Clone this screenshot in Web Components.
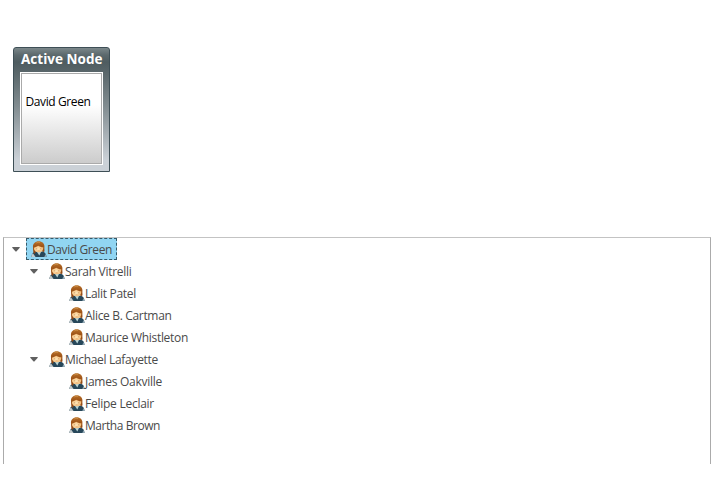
<!DOCTYPE html>
<html lang="en"><head><meta charset="utf-8"><title>Active Node</title>
<style>
html,body{margin:0;background:#fff;height:500px;overflow:hidden}
body{font:12px/22px "Open Sans","Noto Sans",sans-serif;color:#4a4a4a}
</style></head><body>
<org-page></org-page>
<script>
class FitText extends HTMLElement{
  connectedCallback(){
    const root=this.attachShadow({mode:'open'});
    root.innerHTML='<style>:host{display:inline-block;white-space:nowrap}span{display:inline-block}</style><span></span>';
    const s=root.querySelector('span'), t=this.getAttribute('text');
    s.textContent=t;
    const w=+this.getAttribute('width');
    s.style.letterSpacing=((w-s.getBoundingClientRect().width)/t.length)+'px';
  }
}
customElements.define('fit-text',FitText);

class PersonIcon extends HTMLElement{
  constructor(){super();this.attachShadow({mode:'open'}).innerHTML=`
<style>:host{display:block;width:16px;height:16px}svg{display:block}</style>
<svg width="16" height="16" viewBox="0 0 16 16">
<defs><linearGradient id="h" x2="0" y2="1"><stop stop-color="#b8732c"/><stop offset=".4" stop-color="#a05518"/><stop offset="1" stop-color="#8a4311"/></linearGradient>
<radialGradient id="f" cx=".45" cy=".5" r=".6"><stop stop-color="#ffe9bd"/><stop offset="1" stop-color="#f2b56e"/></radialGradient></defs>
<path d="M.4 16C.6 13.500 1.600 11.300 4 10.800h8c2.200.5 3.300 2.600 3.500 5.200z" fill="#27475a"/>
<path d="M.4 16c.1-1.600.6-2.800 1.500-3.800L4.600 16z" fill="#c3cacb"/>
<path d="M15.500 16c-.1-1.300-.4-2.300-1-3.100L13.300 16z" fill="#8ca4b0"/>
<path d="M6 11h4L8.300 14.500z" fill="#b9d5d6"/>
<path d="M2 6.300C1.600 2.500 4.300.2 7.700.2s6.100 2.200 5.700 5.800c-.2 1.500.3 3 0 4.500-.7.800-1.900.6-2.400-.5H4.800c-.1 1.800-.8 2.800-1.900 2.600C1.900 10.600 2.200 8.100 2 6.300z" fill="url(#h)"/>
<path d="M2.900 6.700C4.500 6 6.300 5.600 7.200 4.700c1.100.8 3 1.400 5.100 1.600.2 3-1.400 5-4.600 5s-4.900-1.800-4.800-4.600z" fill="url(#f)"/>
<path d="M4.900 7.800h1.300M9 7.800h1.300" stroke="#b97c45" stroke-width=".6"/>
<path d="M6.700 9.800h2" stroke="#dc9254" stroke-width=".5"/>
<path d="M5.300 2c1.100-.8 2.600-.9 3.700-.4" stroke="#d0944c" stroke-width=".8" fill="none"/>
</svg>`}
}
customElements.define('person-icon',PersonIcon);

class TreeRow extends HTMLElement{
  connectedCallback(){
    const lvl=+this.getAttribute('level'), leaf=lvl===2;
    this.attachShadow({mode:'open'}).innerHTML=`
<style>
:host{display:flex;height:22px;box-sizing:border-box;padding-left:${[8,26,48][lvl]}px;align-items:center}
.arrow{width:8px;height:5px;margin-right:6px;flex:none}
.item{display:flex;box-sizing:border-box;height:22px;align-items:center;padding:0 5px 0 ${leaf?17:5}px}
:host([selected]) .item{background:#91d5f2;padding:0 4px;border:1px dashed #365a6b}
person-icon{flex:none}
fit-text{height:20px}
</style>
${leaf?'':'<svg class="arrow" viewBox="0 0 8 5"><path d="M.3 0h7.400v.7L4.400 4.600h-.8L.3.700z" fill="#606060"/></svg>'}
<div class="item"><person-icon></person-icon><fit-text text="${this.getAttribute('name')}" width="${this.getAttribute('w')}"></fit-text></div>`;
  }
}
customElements.define('tree-row',TreeRow);

class OrgTree extends HTMLElement{
  constructor(){super();this.attachShadow({mode:'open'}).innerHTML=`
<style>:host{display:block;box-sizing:border-box;width:708px;height:227px;border:1px solid #ababab;border-top-color:#c3c3c3;border-bottom:0}</style><slot></slot>`}
}
customElements.define('org-tree',OrgTree);

class NodeCard extends HTMLElement{
  constructor(){super();this.attachShadow({mode:'open'}).innerHTML=`
<style>
:host{display:flex;flex-direction:column;box-sizing:border-box;width:97px;height:125px;border:1px solid #3e4f56;border-radius:3px 3px 0 0;padding:0 6px 6px;background:linear-gradient(#7b878a 0,#5c696d 7px,#4e5c60 14px,#59666a 24px,#818c90 58px,#cbd1d7 112px,#cbd1d7)}
header{height:24px;line-height:23px;font-size:13.500px;font-weight:700;color:#fff;padding-left:1px;white-space:nowrap}
.body{flex:1;border:1px solid #fff;box-shadow:inset 0 0 0 1px #aaa;background:linear-gradient(#fff 35%,#cbcbcb);color:#000;padding:18px 0 0 4.500px;box-sizing:border-box}
</style>
<header><fit-text text="Active Node" width="81.500"></fit-text></header>
<div class="body"><slot></slot></div>`}
}
customElements.define('node-card',NodeCard);

class OrgPage extends HTMLElement{
  constructor(){super();this.attachShadow({mode:'open'}).innerHTML=`
<style>:host{display:flex;flex-direction:column;gap:65px;padding-top:47px}node-card{margin-left:13px}org-tree{margin-left:3px}</style>
<node-card><fit-text text="David Green" width="65"></fit-text></node-card>
<org-tree>
<tree-row level="0" selected name="David Green" w="65"></tree-row>
<tree-row level="1" name="Sarah Vitrelli" w="66.500"></tree-row>
<tree-row level="2" name="Lalit Patel" w="51"></tree-row>
<tree-row level="2" name="Alice B. Cartman" w="86.500"></tree-row>
<tree-row level="2" name="Maurice Whistleton" w="103"></tree-row>
<tree-row level="1" name="Michael Lafayette" w="93"></tree-row>
<tree-row level="2" name="James Oakville" w="77"></tree-row>
<tree-row level="2" name="Felipe Leclair" w="69"></tree-row>
<tree-row level="2" name="Martha Brown" w="75"></tree-row>
</org-tree>`}
}
customElements.define('org-page',OrgPage);
</script></body></html>
